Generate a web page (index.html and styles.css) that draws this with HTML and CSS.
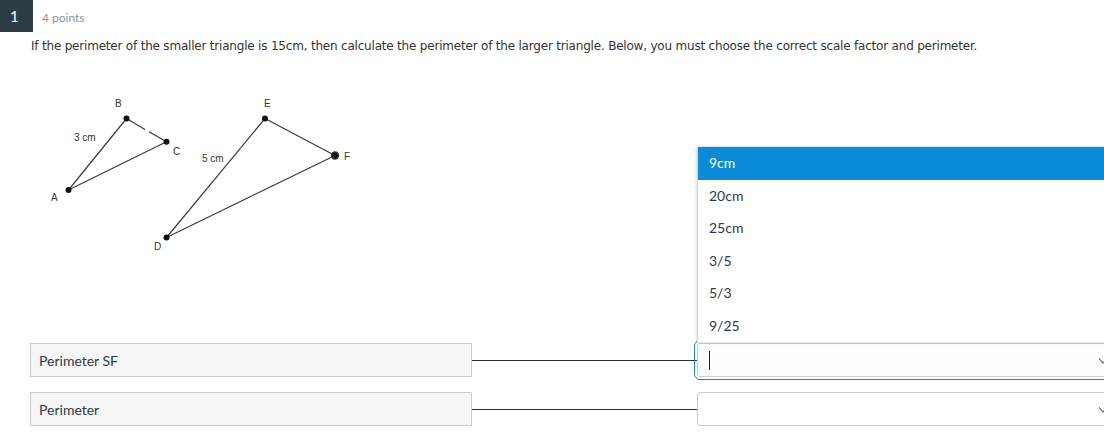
FILE: index.html
```html
<!DOCTYPE html>
<html>
<head>
<meta charset="utf-8">
<link rel="stylesheet" href="styles.css">
</head>
<body>
<div class="question">
  <div class="q-header">
    <div class="q-number">1</div>
    <div class="q-points">4 points</div>
  </div>
  <div class="q-body">
    <p class="q-text">If the perimeter of the smaller triangle is 15cm, then calculate the perimeter of the larger triangle. Below, you must choose the correct scale factor and perimeter.</p>
    <div class="figure">
      <svg width="340" height="287" viewBox="30 56 340 287" xmlns="http://www.w3.org/2000/svg">
        <g stroke="#3a3a3a" stroke-width="1.2" fill="none">
          <line x1="68.5" y1="190" x2="126.5" y2="118.5"/>
          <line x1="126.5" y1="118.5" x2="145" y2="129.5"/>
          <line x1="149" y1="131.8" x2="166.5" y2="141.8"/>
          <line x1="68.5" y1="190" x2="166.5" y2="141.8"/>
          <line x1="166.5" y1="237.5" x2="265" y2="118.5"/>
          <line x1="265" y1="118.5" x2="335" y2="155.5"/>
          <line x1="166.5" y1="237.5" x2="335" y2="155.5"/>
        </g>
        <g fill="#111">
          <circle cx="68.5" cy="190" r="3"/>
          <circle cx="126.5" cy="118.5" r="3"/>
          <circle cx="166.5" cy="141.8" r="3"/>
          <circle cx="166.5" cy="237.5" r="3"/>
          <circle cx="265" cy="118.5" r="3"/>
          <circle cx="335" cy="155.5" r="4.2" fill="#333"/>
          <circle cx="335" cy="155.5" r="2.8"/>
        </g>
        <g class="fig-label" fill="#333">
          <text x="115" y="107">B</text>
          <text x="173" y="155">C</text>
          <text x="51" y="201">A</text>
          <text x="264" y="107">E</text>
          <text x="344" y="160">F</text>
          <text x="154" y="250">D</text>
          <text x="74" y="141">3 cm</text>
          <text x="202" y="162">5 cm</text>
        </g>
      </svg>
    </div>
    <div class="matches">
      <div class="match-row">
        <div class="match-label">Perimeter SF</div>
        <div class="connector"></div>
        <div class="select-wrap">
          <div class="select focused">
            <span class="caret"></span>
            <svg class="chevron" width="10" height="8" viewBox="0 0 10 8"><path d="M1 1.5 L5 6 L9 1.5" stroke="#777" stroke-width="1.2" fill="none"/></svg>
          </div>
          <ul class="dropdown">
            <li class="active">9cm</li>
            <li>20cm</li>
            <li>25cm</li>
            <li>3/5</li>
            <li>5/3</li>
            <li>9/25</li>
          </ul>
        </div>
      </div>
      <div class="match-row">
        <div class="match-label">Perimeter</div>
        <div class="connector"></div>
        <div class="select-wrap">
          <div class="select">
            <svg class="chevron" width="10" height="8" viewBox="0 0 10 8"><path d="M1 1.5 L5 6 L9 1.5" stroke="#777" stroke-width="1.2" fill="none"/></svg>
          </div>
        </div>
      </div>
    </div>
  </div>
</div>
</body>
</html>
```

FILE: styles.css
```css
html, body {
  margin: 0;
  padding: 0;
  background: #fff;
  overflow: hidden;
}
body {
  width: 1104px;
  height: 436px;
  font-family: "Lato", "Liberation Sans", sans-serif;
  color: #2d3b45;
}
.q-header {
  display: flex;
  align-items: center;
  height: 32px;
}
.q-number {
  width: 33px;
  height: 32px;
  background: #2d3b45;
  color: #fff;
  font-size: 15px;
  display: flex;
  align-items: center;
  padding-left: 10px;
  box-sizing: border-box;
}
.q-points {
  padding-left: 9px;
  font-size: 12px;
  color: #8b969e;
  padding-top: 2px;
}
.q-body {
  padding-left: 31px;
}
.q-text {
  margin: 0;
  padding-top: 4px;
  height: 20px;
  font-family: "DejaVu Sans", Verdana, sans-serif;
  font-size: 12px;
  line-height: 20px;
  color: #333;
  letter-spacing: -0.2px;
  white-space: nowrap;
}
.figure {
  height: 287px;
  margin-left: -31px;
}
.figure svg {
  display: block;
  margin-left: 30px;
}
.fig-label text {
  font-family: "Liberation Sans", Arial, sans-serif;
  font-size: 10px;
}
.matches {
  display: flex;
  flex-direction: column;
  gap: 15px;
  margin-left: -1px;
}
.match-row {
  display: flex;
  align-items: center;
  height: 34px;
}
.match-label {
  width: 442px;
  height: 34px;
  box-sizing: border-box;
  background: #f5f5f5;
  border: 1px solid #c7cdd1;
  font-size: 14px;
  color: #2d3b45;
  display: flex;
  align-items: center;
  padding-left: 8px;
  flex: none;
}
.connector {
  width: 225px;
  height: 1px;
  background: #2a2f33;
  flex: none;
}
.select-wrap {
  position: relative;
  flex: none;
  width: 420px;
  height: 34px;
}
.select {
  height: 34px;
  box-sizing: border-box;
  border: 1px solid #c7cdd1;
  border-radius: 3px;
  background: #fff;
  position: relative;
}
.select.focused {
  background: #fcfefe;
  outline: 1.5px solid #1d8c8c;
  outline-offset: 2px;
}
.caret {
  position: absolute;
  left: 11px;
  top: 7px;
  width: 1px;
  height: 19px;
  background: #222;
}
.chevron {
  position: absolute;
  left: 400px;
  top: 13px;
}
.dropdown {
  position: absolute;
  left: 0;
  bottom: 35px;
  width: 420px;
  margin: 0;
  padding: 0;
  list-style: none;
  background: #fff;
  box-shadow: 0 0 3px rgba(0, 0, 0, 0.25);
  border-left: 1px solid #d5d9dc;
}
.dropdown li {
  height: 32.5px;
  display: flex;
  align-items: center;
  padding-left: 11px;
  padding-bottom: 1px;
  box-sizing: border-box;
  font-size: 14px;
  color: #2d3b45;
}
.dropdown li.active {
  background: #0a8bd9;
  color: #fff;
}
```
